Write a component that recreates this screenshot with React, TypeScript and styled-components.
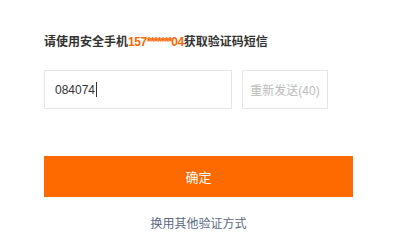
import styled, { createGlobalStyle } from 'styled-components'

const GlobalStyle = createGlobalStyle`
	body {
		margin: 0;
		background: #fff;
		font-family: 'Microsoft YaHei', 'Liberation Sans', 'Noto Sans CJK SC', sans-serif;
	}
`

const Page = styled.div`
	padding: 34px 0 0 44px;
	width: 309px;
`

const Title = styled.p`
	margin: 0;
	font-size: 12px;
	line-height: 17px;
	font-weight: bold;
	color: #333;
`

const Phone = styled.span`
	color: #ff6600;
	letter-spacing: -0.4px;
`

const Mask = styled.span`
	letter-spacing: -1.2px;
`

const CodeRow = styled.div`
	display: flex;
	gap: 10px;
	margin-top: 19px;
`

const CodeInput = styled.div`
	box-sizing: border-box;
	width: 188px;
	height: 39px;
	border: 1px solid #e6e6e6;
	display: flex;
	align-items: center;
	padding-left: 10px;
	font-size: 12px;
	color: #333;
`

const Caret = styled.span`
	display: inline-block;
	width: 1px;
	height: 15px;
	margin-left: 1px;
	background: #333;
`

const ResendButton = styled.div`
	box-sizing: border-box;
	width: 86px;
	height: 39px;
	border: 1px solid #e6e6e6;
	display: flex;
	align-items: center;
	justify-content: center;
	font-size: 12px;
	color: #bbb;
`

const ConfirmButton = styled.div`
	margin-top: 47px;
	height: 41px;
	background: #ff6a00;
	color: #fff;
	font-size: 13px;
	display: flex;
	align-items: center;
	justify-content: center;
`

const SwitchLink = styled.p`
	margin: 19px 0 0;
	text-align: center;
	font-size: 12px;
	line-height: 17px;
	color: #5a6785;
`

const App = () => {
	return (
		<>
			<GlobalStyle />
			<Page>
				<Title>
					请使用安全手机
					<Phone>
						157<Mask>*******</Mask>04
					</Phone>
					获取验证码短信
				</Title>
				<CodeRow>
					<CodeInput>
						084074
						<Caret />
					</CodeInput>
					<ResendButton>重新发送(40)</ResendButton>
				</CodeRow>
				<ConfirmButton>确定</ConfirmButton>
				<SwitchLink>换用其他验证方式</SwitchLink>
			</Page>
		</>
	)
}

export default App
